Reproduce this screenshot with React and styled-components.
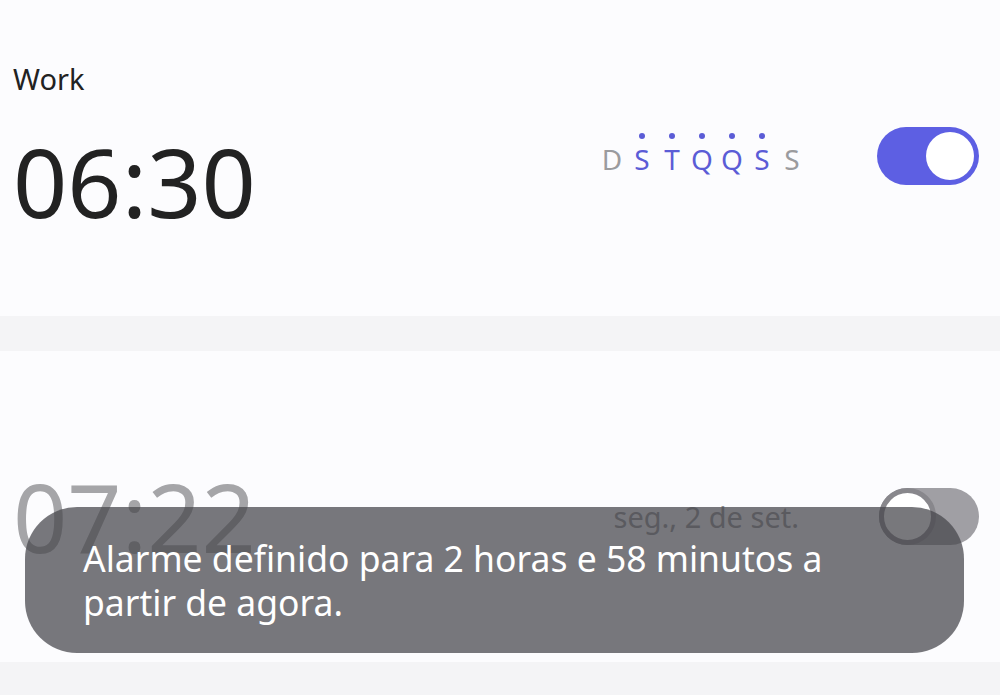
import React from "react";
import styled, { createGlobalStyle } from "styled-components";

const GlobalStyles = createGlobalStyle`
  html, body {
    margin: 0;
    padding: 0;
    background: #f4f4f6;
  }
  body {
    font-family: "Noto Sans", "Open Sans", sans-serif;
  }
`;

const Screen = styled.div`
  position: relative;
  width: 1000px;
  height: 695px;
  overflow: hidden;
  display: flex;
  flex-direction: column;
  gap: 35px;
  background: #f4f4f6;
`;

const Card = styled.div`
  flex: none;
  height: ${(p) => p.$height}px;
  box-sizing: border-box;
  padding: ${(p) => p.$padTop || 0}px 21px ${(p) => p.$padBottom || 0}px 13px;
  background: #fcfcfe;
  display: flex;
  align-items: center;
  justify-content: space-between;
`;

const Info = styled.div`
  display: flex;
  flex-direction: column;
  margin-bottom: ${(p) => p.$lift || 0}px;
`;

const Label = styled.div`
  font-size: 29px;
  line-height: 1;
  color: #222;
  margin-bottom: 41px;
`;

const Time = styled.div`
  font-size: 95px;
  line-height: 1;
  color: ${(p) => (p.$off ? "#a5a5a8" : "#222")};
`;

const Side = styled.div`
  display: flex;
  align-items: center;
  gap: ${(p) => p.$gap}px;
`;

const Days = styled.div`
  display: flex;
  margin-bottom: 6px;
`;

const Day = styled.div`
  width: 30px;
  display: flex;
  flex-direction: column;
  align-items: center;
  gap: 6px;
`;

const Dot = styled.span`
  width: 6px;
  height: 6px;
  border-radius: 50%;
  background: ${(p) => (p.$on ? "#5b5cd6" : "transparent")};
`;

const Letter = styled.span`
  font-size: 28px;
  line-height: 1;
  color: ${(p) => (p.$on ? "#5b5cd6" : "#9b9b9e")};
`;

const DateText = styled.div`
  font-size: 29px;
  line-height: 1;
  color: #909094;
`;

const Switch = styled.div`
  width: ${(p) => (p.$on ? 102 : 100)}px;
  height: ${(p) => (p.$on ? 58 : 57)}px;
  box-sizing: border-box;
  border-radius: 29px;
  padding: ${(p) => (p.$on ? 5 : 0)}px;
  background: ${(p) => (p.$on ? "#5d5fe3" : "#a09fa4")};
  display: flex;
  justify-content: ${(p) => (p.$on ? "flex-end" : "flex-start")};
  align-items: center;
`;

const Knob = styled.span`
  width: ${(p) => (p.$on ? 48 : 57)}px;
  height: ${(p) => (p.$on ? 48 : 57)}px;
  box-sizing: border-box;
  border-radius: 50%;
  background: #fff;
  border: ${(p) => (p.$on ? "none" : "5px solid #88878c")};
`;

const Toast = styled.div`
  position: absolute;
  left: 25px;
  top: 507px;
  width: 939px;
  height: 146px;
  box-sizing: border-box;
  padding: 0 80px 0 58px;
  border-radius: 52px;
  background: rgba(70, 70, 75, 0.73);
  color: #fff;
  font-size: 35.5px;
  line-height: 44px;
  display: flex;
  align-items: center;
`;

const days = [
  { l: "D", on: false },
  { l: "S", on: true },
  { l: "T", on: true },
  { l: "Q", on: true },
  { l: "Q", on: true },
  { l: "S", on: true },
  { l: "S", on: false },
];

function App() {
  return (
    <>
      <GlobalStyles />
      <Screen>
        <Card $height={316} $padBottom={4}>
          <Info $lift={20}>
            <Label>Work</Label>
            <Time>06:30</Time>
          </Info>
          <Side $gap={70}>
            <Days>
              {days.map((d, i) => (
                <Day key={i}>
                  <Dot $on={d.on} />
                  <Letter $on={d.on}>{d.l}</Letter>
                </Day>
              ))}
            </Days>
            <Switch $on>
              <Knob $on />
            </Switch>
          </Side>
        </Card>
        <Card $height={311} $padTop={20}>
          <Info>
            <Time $off>07:22</Time>
          </Info>
          <Side $gap={80}>
            <DateText>seg., 2 de set.</DateText>
            <Switch>
              <Knob />
            </Switch>
          </Side>
        </Card>
        <Toast>Alarme definido para 2 horas e 58 minutos a partir de agora.</Toast>
      </Screen>
    </>
  );
}

export default App;
